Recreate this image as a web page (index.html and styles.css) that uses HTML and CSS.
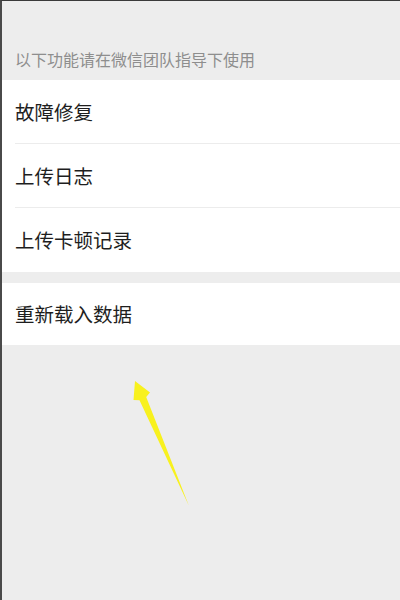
FILE: index.html
```html
<!DOCTYPE html>
<html lang="zh-CN">
<head>
  <meta charset="UTF-8">
  <meta name="viewport" content="width=device-width, initial-scale=1">
  <title>调试</title>
  <link rel="stylesheet" href="styles.css">
</head>
<body>
  <div class="screen">
    <p class="caption">以下功能请在微信团队指导下使用</p>

    <div class="group">
      <div class="row">故障修复</div>
      <div class="row">上传日志</div>
      <div class="row">上传卡顿记录</div>
    </div>

    <div class="group last">
      <div class="row">重新载入数据</div>
    </div>

    <svg class="arrow" width="75" height="130" viewBox="0 0 75 130">
      <polygon points="13,1 11.5,20 17.5,20.2 67,126 24.2,17 28,12.5" fill="#f8f11e"/>
    </svg>
  </div>
</body>
</html>
```

FILE: styles.css
```css
html, body {
  margin: 0;
  padding: 0;
}

body {
  font-family: "Noto Sans CJK SC", "Noto Sans", sans-serif;
  background: #ededed;
}

.screen {
  position: relative;
  height: 600px;
  box-sizing: border-box;
  border-top: 1px solid #3a3a3a;
  border-left: 2px solid #4a4a4a;
  background: #ededed;
  overflow: hidden;
}

.caption {
  margin: 0;
  padding: 47px 0 0 13px;
  height: 32px;
  font-size: 16px;
  line-height: 22px;
  color: #8e8e8e;
}

.group {
  background: #fff;
  margin-bottom: 11px;
}

.row {
  height: 64px;
  line-height: 63px;
  margin-left: 13px;
  font-size: 19.5px;
  color: #1e1e1e;
  border-bottom: 1px solid #ececec;
  box-sizing: border-box;
}

.row:last-child {
  border-bottom: none;
}

.last .row {
  height: 62px;
  line-height: 62px;
}

.arrow {
  position: absolute;
  left: 120px;
  top: 379px;
}
```
